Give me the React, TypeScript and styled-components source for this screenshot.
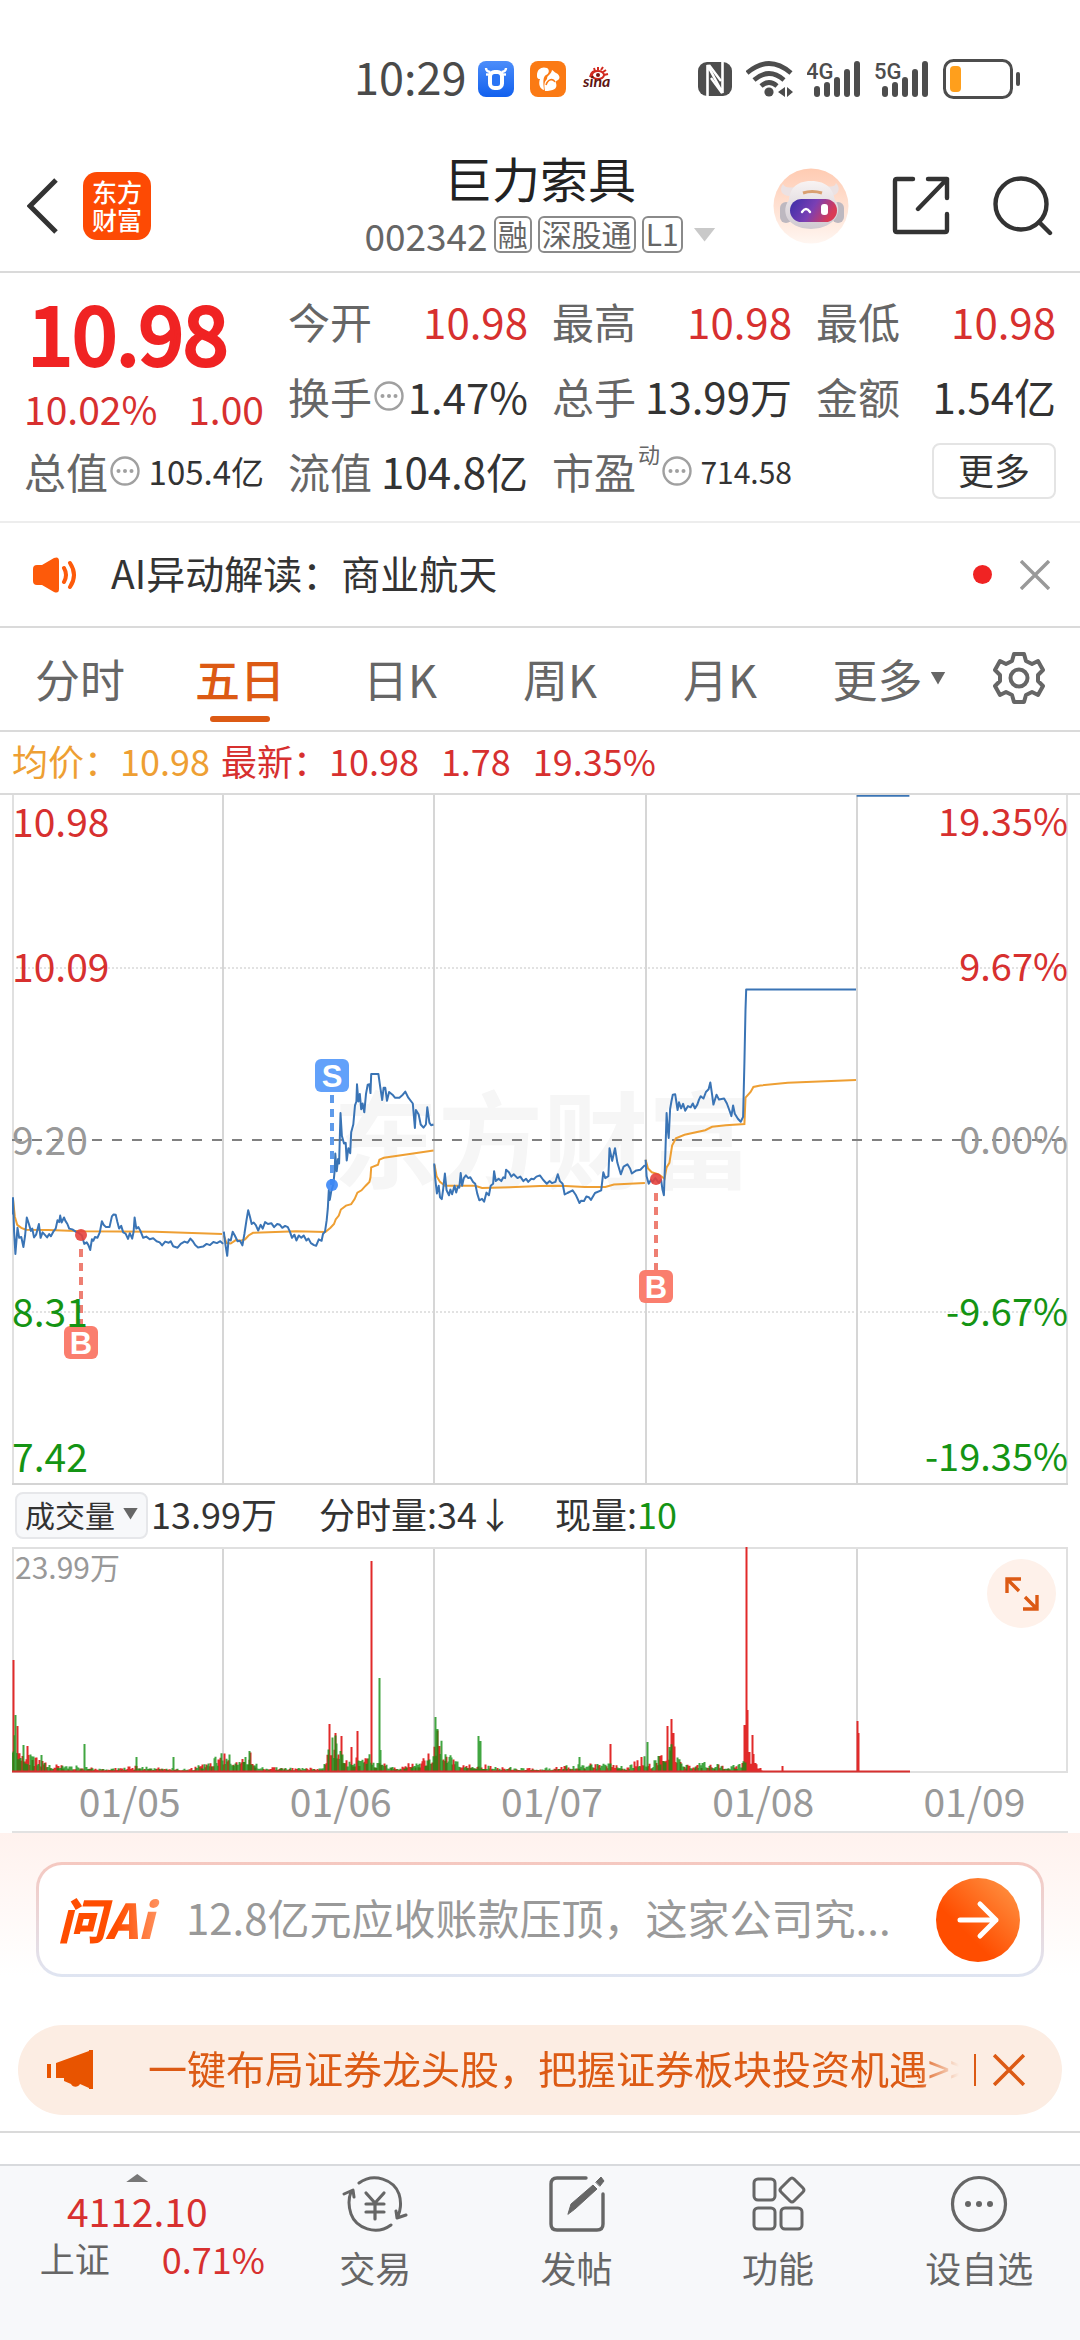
import React from "react";
import styled, { createGlobalStyle } from "styled-components";

const color = {
  up: "#d7302f",
  down: "#149414",
  text: "#333333",
  label: "#666666",
  muted: "#999999",
  line: "#dadada",
  brand: "#dc5a14",
  price: "#3a74b5",
  average: "#ee9f33",
};

const GlobalStyle = createGlobalStyle`
  *, *::before, *::after { box-sizing: border-box; }
  body { margin: 0; background: #ffffff; }
  body, button, input { font-family: "Noto Sans CJK SC", "Noto Sans", sans-serif; }
  button { margin: 0; padding: 0; border: 0; background: none; color: inherit; cursor: pointer; }
  a { color: inherit; text-decoration: none; }
  svg { display: block; flex: none; }
`;

const Page = styled.div`
  display: flex;
  flex-direction: column;
  min-height: 100vh;
  color: ${color.text};
  font-size: 42px;
  white-space: nowrap;
`;

/* ---------- status bar ---------- */

const StatusBar = styled.div`
  display: flex;
  align-items: center;
  justify-content: space-between;
  height: 140px;
  padding: 18px 57px 0 354px;
`;

const StatusLeft = styled.div`
  display: flex;
  align-items: center;
  gap: 12px;
`;

const StatusGroup = styled.div<{ $gap: number }>`
  display: flex;
  align-items: center;
  gap: ${(p) => p.$gap}px;
`;

const Clock = styled.time`
  color: #4a4a4a;
  font-size: 45px;
  line-height: 52px;
  padding-bottom: 6px;
`;

const Signal = ({ label }: { label: string }) => (
  <svg width="54" height="48" viewBox="0 -6 54 48" aria-label={label}>
    <text x="-1" y="18" fontSize="22" fontWeight="500" fontFamily="Roboto, sans-serif" fill="#4d4d4d">
      {label}
    </text>
    {[
      [10, 28],
      [20, 24],
      [30, 19],
      [40, 11],
      [50, 3],
    ].map(([x, y]) => (
      <path key={x} d={`M${x} ${y}V33`} stroke="#4d4d4d" strokeWidth="6" strokeLinecap="round" />
    ))}
  </svg>
);

/* ---------- header ---------- */

const Header = styled.header`
  display: grid;
  grid-template-columns: 1fr auto 1fr;
  align-items: center;
  height: 133px;
  padding: 0 27px;
  border-bottom: 2px solid ${color.line};
`;

const HeaderGroup = styled.div<{ $end?: boolean }>`
  display: flex;
  align-items: center;
  justify-content: ${(p) => (p.$end ? "flex-end" : "flex-start")};
  gap: ${(p) => (p.$end ? 43 : 24)}px;
`;

const AppLogo = styled.span`
  display: grid;
  place-content: center;
  width: 68px;
  height: 68px;
  padding-bottom: 2px;
  border-radius: 14px;
  background: #fd4a04;
  color: #ffffff;
  font-size: 25px;
  font-weight: 500;
  line-height: 28px;
`;

const TitleBlock = styled.div`
  display: flex;
  flex-direction: column;
  align-items: center;
  padding-bottom: 2px;
`;

const Title = styled.h1`
  margin: 0;
  color: #222222;
  font-size: 48px;
  font-weight: 400;
  line-height: 60px;
`;

const CodeRow = styled.button`
  display: flex;
  align-items: center;
  gap: 6px;
  height: 56px;
  color: ${color.label};
  font-size: 37px;
`;

const Tag = styled.span`
  height: 37px;
  padding: 0 2px;
  border: 2px solid #8a8a8a;
  border-radius: 6px;
  font-size: 30px;
  line-height: 30px;
`;

const Triangle = styled.span<{ $w: number; $h: number; $c: string; $up?: boolean; $gap?: number }>`
  width: ${(p) => p.$w}px;
  height: ${(p) => p.$h}px;
  margin-left: ${(p) => p.$gap ?? 0}px;
  background: ${(p) => p.$c};
  clip-path: ${(p) => (p.$up ? "polygon(50% 0, 100% 100%, 0 100%)" : "polygon(0 0, 100% 0, 50% 100%)")};
`;

/* ---------- quote ---------- */

const Quote = styled.section`
  display: grid;
  grid-template-columns: repeat(4, 1fr);
  grid-auto-rows: 75px;
  column-gap: 24px;
  padding: 10px 24px 13px;
  border-bottom: 2px solid #ededed;
`;

const LastPrice = styled.div`
  grid-row: span 2;
  display: flex;
  flex-direction: column;
  color: ${color.up};
`;

const BigPrice = styled.strong`
  padding-left: 4px;
  color: #f02323;
  font-size: 80px;
  font-weight: 400;
  line-height: 94px;
  -webkit-text-stroke: 4px #f02323;
`;

const Change = styled.div`
  display: flex;
  justify-content: space-between;
  font-size: 39px;
  line-height: 62px;
`;

const Metric = styled.div`
  display: flex;
  align-items: center;
  justify-content: space-between;
`;

const MetricLabel = styled.span`
  display: flex;
  align-items: center;
  gap: 2px;
  color: ${color.label};
`;

const Sup = styled.sup`
  align-self: flex-start;
  font-size: 22px;
  line-height: 26px;
`;

const Value = styled.span<{ $up?: boolean; $size?: number }>`
  color: ${(p) => (p.$up ? color.up : color.text)};
  font-size: ${(p) => p.$size ?? 42}px;
`;

const MoreButton = styled.button`
  justify-self: end;
  align-self: center;
  width: 124px;
  height: 56px;
  padding-bottom: 4px;
  border: 2px solid #e4e4e4;
  border-radius: 8px;
  color: ${color.text};
  font-size: 36px;
  line-height: 48px;
`;

const InfoDot = () => (
  <svg width="30" height="30" viewBox="0 0 30 30" aria-hidden>
    <circle cx="15" cy="15" r="13.5" fill="none" stroke="#a0a0a0" strokeWidth="2.4" />
    <g fill="#a0a0a0">
      <circle cx="8.5" cy="15" r="2" />
      <circle cx="15" cy="15" r="2" />
      <circle cx="21.5" cy="15" r="2" />
    </g>
  </svg>
);

/* ---------- notice ---------- */

const Notice = styled.section`
  display: flex;
  align-items: center;
  height: 105px;
  padding: 0 30px 0 33px;
  border-bottom: 2px solid ${color.line};
`;

const NoticeText = styled.a`
  flex: 1;
  margin-left: 33px;
  padding-bottom: 6px;
  font-size: 39px;
  line-height: 52px;
`;

const RedDot = styled.span`
  width: 19px;
  height: 19px;
  margin-right: 28px;
  border-radius: 50%;
  background: #f02323;
`;

/* ---------- tabs ---------- */

const Tabs = styled.nav`
  display: grid;
  grid-template-columns: repeat(5, 160fr) 178fr 82fr;
  height: 104px;
  padding-right: 20px;
  border-bottom: 2px solid ${color.line};
`;

const Tab = styled.button<{ $active?: boolean }>`
  position: relative;
  display: flex;
  align-items: center;
  justify-content: center;
  padding-bottom: 2px;
  color: ${(p) => (p.$active ? color.brand : color.label)};
  font-size: 45px;
  font-weight: ${(p) => (p.$active ? 500 : 400)};

  &::after {
    content: "";
    position: absolute;
    bottom: 8px;
    width: 60px;
    height: 6px;
    border-radius: 3px;
    background: ${(p) => (p.$active ? color.brand : "transparent")};
  }
`;

/* ---------- price chart ---------- */

const Readout = styled.div`
  display: flex;
  align-items: center;
  height: 63px;
  padding: 0 12px 6px;
  color: ${color.up};
  font-size: 36px;
  border-bottom: 2px solid ${color.line};
`;

const ReadoutItem = styled.span<{ $avg?: boolean; $gap: number }>`
  margin-right: ${(p) => p.$gap}px;
  color: ${(p) => (p.$avg ? color.average : color.up)};
`;

const ChartFrame = styled.div`
  position: relative;
  margin: 0 12px;

  svg {
    width: 100%;
    height: auto;
  }
`;

const AxisLabels = styled.ol<{ $right?: boolean }>`
  position: absolute;
  top: 0;
  bottom: 0;
  ${(p) => (p.$right ? "right: 0; text-align: right;" : "left: 0;")}
  display: grid;
  grid-template-rows: 1fr 2fr 2fr 2fr 1fr;
  align-items: center;
  margin: 0;
  padding: 0;
  list-style: none;
  font-size: ${(p) => (p.$right ? 38 : 39)}px;
  line-height: 50px;

  li:first-child { align-self: start; }
  li:last-child { align-self: end; }
`;

const AxisLabel = styled.li<{ $c: string }>`
  padding-bottom: 5px;
  color: ${(p) => p.$c};
`;

type Trace = { x0: number; points: string };

const priceTraces: Trace[] = [
  {
    x0: -35,
    points:
      "35,1135 38,1092 41,1180 45,1238 51,1170 56,1196 62,1194 68,1220 73,1190 78,1143 84,1160 90,1178 94,1172 99,1195 105,1188 113,1160 118,1196 124,1182 130,1188 137,1195 143,1186 148,1192 155,1180 162,1172 167,1150 172,1155 175,1138 179,1156 186,1143 190,1152 196,1160 201,1172 210,1174 220,1180 228,1183 238,1190 245,1212 252,1208 257,1215 262,1228 267,1200 271,1204 276,1194 283,1196 290,1182 296,1153 301,1162 308,1168 318,1168 325,1140 330,1135 336,1136 341,1155 346,1172 352,1165 358,1182 365,1185 372,1199 377,1184 384,1198 388,1180 391,1143 396,1172 402,1168 408,1178 416,1196 425,1193 435,1200 445,1197 455,1205 464,1208 471,1216 480,1206 490,1209 496,1205 503,1218 516,1222 525,1212 536,1206 545,1209 553,1198 560,1205 567,1215 575,1221 590,1219 600,1212 610,1215 620,1207 630,1210 640,1205 648,1212",
  },
  {
    x0: -35,
    points:
      "650,1180 655,1215 660,1243 664,1200 670,1203 676,1180 682,1190 690,1205 697,1204 704,1216 710,1186 716,1150 721,1124 726,1140 731,1160 737,1156 743,1163 750,1177 757,1162 763,1172 770,1155 778,1160 788,1158 796,1168 805,1160 813,1162 820,1170 828,1165 836,1168 842,1180 848,1196 855,1188 861,1203 868,1190 875,1196 882,1190 890,1203 896,1198 903,1210 912,1215 918,1217 926,1200 934,1204 938,1186 944,1180 949,1150 952,1120 955,1072 958,1097 962,1075 968,1057 972,1020 974,976 978,1022 982,990 985,1002 989,870 993,930 999,950 1004,948 1007,994 1012,962 1017,975 1020,920 1026,900 1031,850 1035,840 1037,795 1041,840 1045,820 1049,860 1053,845 1058,868 1063,820 1068,796 1073,795 1076,818 1078,768 1099,768 1104,800 1110,836 1114,804 1119,804 1124,838 1130,815 1140,822 1147,830 1160,830 1170,822 1177,814 1186,830 1199,845 1205,909 1208,862 1216,874 1222,900 1230,908 1237,900 1241,855 1247,895 1252,902 1259,900",
  },
  {
    x0: -35,
    points:
      "1261,1002 1264,1040 1269,1080 1274,1060 1278,1090 1283,1095 1287,1070 1292,1028 1297,1072 1304,1085 1308,1070 1313,1082 1320,1060 1325,1078 1330,1062 1334,1065 1338,1027 1342,1060 1347,1040 1353,1033 1360,1040 1366,1038 1374,1050 1380,1055 1386,1080 1392,1098 1400,1094 1406,1102 1413,1078 1420,1085 1425,1060 1432,1055 1435,1022 1440,1048 1448,1042 1456,1048 1462,1038 1467,1040 1470,1018 1478,1025 1485,1036 1492,1030 1503,1040 1511,1036 1520,1048 1528,1042 1534,1050 1543,1042 1550,1043 1558,1036 1568,1033 1578,1045 1588,1055 1596,1048 1603,1053 1613,1050 1620,1030 1626,1048 1634,1055 1640,1083 1648,1079 1663,1072 1673,1085 1683,1105 1688,1099 1696,1100 1703,1088 1710,1090 1716,1097 1728,1079 1746,1072 1752,1025 1758,1040 1767,1035 1770,962 1778,995 1786,962 1793,1000 1803,1030 1811,1010 1822,1004 1830,1015 1835,1028 1848,1020 1860,1018 1873,1006",
  },
  {
    x0: 1533,
    points:
      "307,992 310,1035 316,1055 322,1045 328,1050 335,1040 345,1052 352,1045 356,1070 360,1085 364,990 366,930 368,870 371,910 374,935 378,860 382,840 386,822 393,821 397,845 400,862 404,842 410,858 416,846 422,864 430,852 438,855 444,845 450,858 457,848 462,835 467,826 475,832 482,815 490,808 495,790 500,822 504,848 513,822 520,835 535,832 543,845 550,862 556,878 561,850 566,872 575,885 583,893 590,880 594,740 597,600 599,547 918,547",
  },
  { x0: 1533, points: "920,41 1073,41" },
];

const averageTraces: Trace[] = [
  { x0: -35, points: "38,1095 43,1140 50,1162 62,1170 75,1175 140,1176 240,1179 450,1180 645,1186" },
  {
    x0: -35,
    points:
      "650,1190 658,1210 670,1211 685,1202 700,1204 712,1200 722,1190 735,1183 800,1181 860,1179 945,1181 960,1170 970,1160 975,1148 984,1138 990,1122 1005,1112 1020,1108 1030,1095 1038,1078 1050,1072 1062,1060 1073,1050 1076,1038 1078,1012 1098,1005 1102,992 1115,987 1180,978 1259,968",
  },
  {
    x0: -35,
    points:
      "1262,1005 1268,1035 1278,1050 1292,1060 1380,1060 1400,1066 1480,1064 1568,1061 1628,1060 1698,1063 1758,1063 1783,1057 1873,1053",
  },
  {
    x0: 1533,
    points:
      "307,992 314,1015 325,1025 345,1030 362,1042 368,1012 376,1000 384,955 395,936 420,927 480,915 500,906 540,902 594,899 597,830 612,815 620,802 640,798 720,791 918,784",
  },
];

/* Traces are stored in a finer unit than the drawing: 2.904 units across and 2.613 down per pixel. */
const UNIT_X = 2.904;
const UNIT_Y = 2.613;

const toPath = ({ x0, points }: Trace) =>
  points
    .split(" ")
    .map((pair, i) => {
      const [x, y] = pair.split(",").map(Number);
      return `${i ? "L" : "M"}${((x + x0) / UNIT_X).toFixed(1)} ${((y - 39) / UNIT_Y).toFixed(1)}`;
    })
    .join("");

const dayLines = [211, 422, 634, 845];

type Marker = { kind: "B" | "S"; x: number; dot: number; top: number };

const markers: Marker[] = [
  { kind: "B", x: 69, dot: 440, top: 531 },
  { kind: "S", x: 320, dot: 390, top: 264 },
  { kind: "B", x: 644, dot: 384, top: 475 },
];

const TradeMarker = ({ kind, x, dot, top }: Marker) => {
  const buy = kind === "B";
  const fill = buy ? "#fa7e6e" : "#62a1fa";
  return (
    <g>
      <path
        d={buy ? `M${x} ${dot + 14}V${top}` : `M${x} ${top + 36}V${dot}`}
        stroke={buy ? "#ee7f73" : "#5f9bea"}
        strokeWidth="4"
        strokeDasharray="8 6"
      />
      <circle cx={x} cy={dot} r="6" fill={buy ? "#e5433c" : "#3b86f5"} fillOpacity="0.9" />
      <rect x={x - 17} y={top} width="34" height="33" rx="6" fill={fill} />
      <text
        x={x}
        y={top + 28}
        textAnchor="middle"
        fontSize="31"
        fontWeight="700"
        fontFamily="Liberation Sans, sans-serif"
        fill="#ffffff"
      >
        {kind}
      </text>
    </g>
  );
};

const PriceChart = () => (
  <svg viewBox="0 0 1056 690" role="img" aria-label="五日走势">
    <text x="321" y="385" fontSize="105" fontWeight="700" fill="#f6f6f6">
      东方财富
    </text>
    <path d="M0 173H1056M0 517H1056" stroke="#e2e2e2" strokeWidth="2" strokeDasharray="2 2" />
    <path d={dayLines.map((x) => `M${x} 0V690`).join("")} stroke="#d6d6d6" strokeWidth="2" />
    <path d="M1 0V690M1055 0V690" stroke="#e0e0e0" strokeWidth="2" />
    <path d="M0 689H1056" stroke="#d4d4d4" strokeWidth="2" />
    <path d="M0 345H1056" stroke="#808080" strokeWidth="2" strokeDasharray="10 10" />
    {averageTraces.map((t) => (
      <path key={t.points} d={toPath(t)} fill="none" stroke={color.average} strokeWidth="2" />
    ))}
    {priceTraces.map((t) => (
      <path key={t.points} d={toPath(t)} fill="none" stroke={color.price} strokeWidth="2" strokeLinejoin="round" />
    ))}
    {markers.map((m) => (
      <TradeMarker key={m.x} {...m} />
    ))}
  </svg>
);

/* ---------- volume chart ---------- */

const VolumeBar = styled.div`
  display: flex;
  align-items: center;
  height: 62px;
  padding: 0 15px 2px;
  font-size: 36px;
`;

const IndicatorButton = styled.button`
  display: flex;
  align-items: center;
  justify-content: center;
  width: 133px;
  height: 47px;
  margin-right: 3px;
  padding-bottom: 3px;
  border: 2px solid #e6e7ea;
  border-radius: 8px;
  background: #f7f8fa;
  font-size: 30px;
`;

const VolumeItem = styled.span`
  margin-right: 42px;
  padding-bottom: 4px;
  line-height: 48px;

  b {
    color: ${color.down};
    font-weight: 400;
  }
`;

const VolumeMax = styled.span`
  position: absolute;
  top: 0;
  left: 3px;
  color: ${color.muted};
  font-size: 30px;
  line-height: 38px;
`;

const ExpandButton = styled.button`
  position: absolute;
  top: 12px;
  right: 12px;
  display: grid;
  place-items: center;
  width: 69px;
  height: 69px;
  border-radius: 50%;
  background: #fef1ea;

  svg {
    width: 36px;
    height: 36px;
  }
`;

const RED = "#e12a2a";
const GREEN = "#129012";

const envelope: [number, number][] = [
  [0, 48], [3, 36], [9, 26], [16, 18], [26, 12], [40, 7], [57, 6], [74, 6], [92, 3], [126, 6],
  [177, 3], [194, 9], [211, 19], [214, 19], [226, 9], [238, 20], [245, 6], [280, 4], [311, 4],
  [315, 28], [324, 36], [330, 24], [336, 11], [350, 16], [357, 24], [363, 8], [368, 12], [384, 4],
  [394, 8], [408, 11], [420, 20], [424, 40], [430, 28], [436, 20], [450, 10], [470, 7], [505, 4],
  [528, 4], [563, 7], [597, 9], [614, 5], [631, 16], [638, 8], [645, 14], [652, 23], [659, 34],
  [666, 17], [673, 8], [697, 10], [714, 5], [728, 8], [732, 18], [735, 34], [739, 16], [748, 4],
  [752, 1], [908, 1],
];

const spikes: [number, number, string][] = [
  [1, 112, RED], [5, 46, RED], [15, 26, RED], [3, 57, GREEN], [11, 27, GREEN], [29, 17, GREEN],
  [72, 28, GREEN], [124, 15, GREEN], [161, 15, GREEN], [237, 21, GREEN], [317, 48, RED],
  [323, 39, RED], [329, 36, RED], [339, 25, RED], [345, 41, RED], [359, 211, RED],
  [367, 94, GREEN], [368, 22, GREEN], [423, 55, GREEN], [425, 43, GREEN], [466, 36, GREEN],
  [468, 31, GREEN], [567, 15, GREEN], [598, 28, RED], [635, 30, GREEN], [646, 16, GREEN],
  [655, 46, RED], [659, 53, RED], [661, 39, RED], [732, 47, RED], [734, 225, RED], [735, 62, RED],
  [740, 37, RED], [741, 18, RED], [770, 6, RED], [845, 51, RED], [846, 39, RED],
];

const heightAt = (x: number) => {
  const i = Math.max(1, envelope.findIndex(([ex]) => ex >= x));
  const [x1, h1] = envelope[i - 1];
  const [x2, h2] = envelope[i];
  return h1 + ((h2 - h1) * (x - x1)) / (x2 - x1);
};

const volumeBars = (() => {
  let seed = 11;
  const next = () => (seed = (seed * 16807) % 2147483647) / 2147483647;
  const bars: [number, number, string][] = [];
  for (let x = 0; x < 752; x += 1) {
    const r = next();
    const h = heightAt(x) * (0.4 + 0.7 * r * r);
    const c = x > 733 ? RED : next() > 0.5 ? RED : GREEN;
    bars.push([x, Math.max(1, h), c]);
  }
  return [...bars, ...spikes];
})();

const barPath = (c: string) =>
  volumeBars
    .filter((b) => b[2] === c)
    .map(([x, h]) => `M${x + 0.5} 225V${(225 - h).toFixed(1)}`)
    .join("");

const VolumeChart = () => (
  <svg viewBox="0 0 1056 226" role="img" aria-label="成交量">
    <path d={dayLines.map((x) => `M${x} 0V225`).join("")} stroke="#d6d6d6" strokeWidth="2" />
    <path d="M1 0V225M1055 0V225M0 225H1056M0 1H1056" stroke="#e0e0e0" strokeWidth="2" />
    <path d={barPath(RED)} stroke={RED} strokeWidth="2" />
    <path d={barPath(GREEN)} stroke={GREEN} strokeWidth="2" strokeOpacity="0.8" />
    <path d="M0 224.5H898" stroke={color.up} strokeWidth="2" />
  </svg>
);

const Dates = styled.div`
  display: grid;
  grid-template-columns: repeat(5, 1fr);
  height: 58px;
  padding-left: 24px;
  color: ${color.muted};
  font-size: 39px;
  line-height: 54px;
  text-align: center;
`;

const ChartEnd = styled.hr`
  height: 0;
  margin: 0 12px;
  border: 0;
  border-top: 2px solid #e2e2e2;
`;

/* ---------- promotions ---------- */

const Promo = styled.section`
  display: flex;
  flex-direction: column;
  padding: 29px 18px 16px;
  background: linear-gradient(#fff2ee, #ffffff 48%);
  border-bottom: 2px solid ${color.line};
`;

const AskBox = styled.form`
  display: flex;
  align-items: center;
  height: 115px;
  margin: 0 18px 48px;
  padding: 0 21px 0 19px;
  border: 3px solid transparent;
  border-radius: 26px;
  background:
    linear-gradient(#ffffff, #ffffff) padding-box,
    linear-gradient(#f5c8c0, #dfe5f2) border-box;
`;

const AskLogo = styled.label`
  width: 106px;
  padding-bottom: 4px;
  background: linear-gradient(90deg, #ff4d00 55%, #ff9a6a);
  background-clip: text;
  color: transparent;
  font-size: 48px;
  font-style: italic;
  font-weight: 900;
  line-height: 60px;
`;

const AskInput = styled.input`
  flex: 1;
  min-width: 0;
  margin-left: 22px;
  padding: 0 0 6px;
  border: 0;
  outline: 0;
  background: none;
  font-size: 42px;
  line-height: 60px;

  &::placeholder {
    color: ${color.muted};
    opacity: 1;
  }
`;

const SendButton = styled.button`
  display: grid;
  place-items: center;
  width: 84px;
  height: 84px;
  border-radius: 50%;
  background: linear-gradient(45deg, #ff4d00 35%, #ff9a4a);
`;

const Banner = styled.div`
  display: flex;
  align-items: center;
  height: 90px;
  padding: 0 37px 0 29px;
  border-radius: 45px;
  background: #fcede3;
  color: ${color.brand};
`;

const BannerText = styled.a`
  flex: 1;
  min-width: 0;
  overflow: hidden;
  margin: 0 15px 0 54px;
  padding-bottom: 6px;
  font-size: 39px;
  line-height: 56px;
  mask-image: linear-gradient(90deg, #000 95%, transparent);
`;

const BannerClose = styled.button`
  padding-left: 17px;
  border-left: 2px solid ${color.brand};
`;

/* ---------- bottom bar ---------- */

const BottomBar = styled.nav`
  display: grid;
  grid-template-columns: 274fr repeat(4, 201fr);
  align-items: start;
  flex: 1;
  margin-top: 31px;
  border-top: 2px solid #d8dadd;
  background: #f7f8fa;
`;

const IndexButton = styled.button`
  display: flex;
  flex-direction: column;
  align-items: center;
  padding-top: 8px;
  color: ${color.up};
  font-size: 39px;
  line-height: 48px;
`;

const IndexPrice = styled.span`
  padding-top: 4px;
`;

const IndexRow = styled.span`
  display: flex;
  gap: 52px;
  padding-left: 30px;
  font-size: 36px;

  em {
    color: ${color.label};
    font-size: 35px;
    font-style: normal;
  }
`;

const NavItem = styled.button`
  display: flex;
  flex-direction: column;
  align-items: center;
  gap: 9px;
  padding-top: 8px;
  color: ${color.label};
  font-size: 36px;
  line-height: 48px;
`;

const NavIcon = ({ children }: { children: React.ReactNode }) => (
  <svg width="66" height="60" viewBox="0 0 66 60" fill="none" stroke="#666666" strokeWidth="3" strokeLinecap="round" strokeLinejoin="round">
    {children}
  </svg>
);

const Cross = ({ size, stroke }: { size: number; stroke: string }) => (
  <svg width={size} height={size} viewBox="0 0 30 30" fill="none" stroke={stroke} strokeWidth="3.4">
    <path d="M1 1L29 29M29 1L1 29" />
  </svg>
);

const Robot = () => (
  <svg width="76" height="76" viewBox="0 0 76 76" aria-hidden>
    <defs>
      <linearGradient id="halo" x1="0" y1="0" x2="0" y2="1">
        <stop offset="0" stopColor="#ffcbb2" />
        <stop offset="1" stopColor="#fff6f1" />
      </linearGradient>
      <linearGradient id="visor" x1="0" y1="0" x2="1" y2="0.3">
        <stop offset="0" stopColor="#3a2fa8" />
        <stop offset="0.55" stopColor="#7a3fb4" />
        <stop offset="1" stopColor="#d93a55" />
      </linearGradient>
      <linearGradient id="shell" x1="0" y1="0" x2="0" y2="1">
        <stop offset="0" stopColor="#f8f3f3" />
        <stop offset="1" stopColor="#cfc9d0" />
      </linearGradient>
    </defs>
    <circle cx="38" cy="38" r="37.5" fill="url(#halo)" />
    <path d="M17 28C8 28 6 21 10 16C12 20 16 20 22 19ZM58 28C66 27 68 20 63 15C62 19 58 19 54 18Z" fill="#ece2e3" />
    <rect x="7" y="34" width="12" height="21" rx="6" fill="#bdb8c0" />
    <rect x="59" y="34" width="12" height="21" rx="6" fill="#bdb8c0" />
    <path d="M38 13C55 13 60 22 62 32C70 42 64 60 38 61C12 60 8 42 16 32C17 22 22 13 38 13Z" fill="url(#shell)" />
    <rect x="17" y="31" width="47" height="23" rx="11.5" fill="url(#visor)" />
    <path d="M30 25Q39 22 49 25" stroke="#d9a071" strokeWidth="3" fill="none" />
    <path d="M29 44Q33 38 37 44" stroke="#ffffff" strokeWidth="2.4" fill="none" strokeLinecap="round" />
    <rect x="48" y="36" width="7" height="11" rx="3" fill="#ffffff" />
  </svg>
);

export default function App() {
  return (
    <Page>
      <GlobalStyle />

      <StatusBar>
        <StatusLeft>
          <Clock>10:29</Clock>
          <StatusGroup $gap={16}>
            <svg width="36" height="36" viewBox="0 0 36 36" aria-hidden>
              <defs>
                <linearGradient id="ox" x1="0" y1="0" x2="0" y2="1">
                  <stop offset="0" stopColor="#4c8dfa" />
                  <stop offset="1" stopColor="#1160ee" />
                </linearGradient>
              </defs>
              <rect width="36" height="36" rx="8" fill="url(#ox)" />
              <path d="M8 7C8 10 10 11 12.500 11M28 7C28 10 26 11 23.500 11" stroke="#fff" strokeWidth="2.400" fill="none" />
              <path d="M8 13.500H28" stroke="#fff" strokeWidth="2.400" />
              <rect x="12" y="11" width="12" height="16" rx="4.500" stroke="#fff" strokeWidth="4" fill="#2a74f4" />
            </svg>
            <svg width="36" height="36" viewBox="0 0 36 36" aria-hidden>
              <rect width="36" height="36" rx="8" fill="#fb7a14" />
              <path
                d="M7 14C7 8 12 5 17 7C20 9 19 13 16 14C13 16 13 20 14 29C10 28 8 23 10 18C7 18 7 16 7 14ZM17 18C17 14 21 14 22 9C24 10 24 11 26 12C29 13 31 17 28 19C27 20 25 20 26 22C28 28 23 30 15 30C14 24 14 21 17 18Z"
                fill="#fff"
              />
              <path d="M16 24C18 18 23 17 25 21" stroke="#fb7a14" strokeWidth="1.600" fill="none" />
            </svg>
            <svg width="36" height="36" viewBox="0 0 36 36" aria-label="sina">
              <path d="M8 16C9 11 12 9 15 11M13 10L12 7M16 9V6M19 9L21 6M21 11L24 9M22 14L26 13" stroke="#d22a20" strokeWidth="2" fill="none" />
              <ellipse cx="16" cy="14" rx="6" ry="4" fill="#fff" stroke="#d22a20" strokeWidth="2" />
              <circle cx="16" cy="14" r="2" fill="#7a1712" />
              <text x="1" y="26" fontSize="16" fontWeight="700" fontStyle="italic" fontFamily="Lato, sans-serif" fill="#5e1512">
                sina
              </text>
            </svg>
          </StatusGroup>
        </StatusLeft>
        <StatusGroup $gap={14}>
          <svg width="34" height="34" viewBox="0 0 34 34" aria-label="NFC">
            <rect width="34" height="34" rx="9" fill="#4d4d4d" />
            <path d="M9.500 34V3L24.500 31V0" fill="none" stroke="#fff" strokeWidth="2.600" />
            <path d="M13 16L24 31M11 3L23 19" stroke="#fff" strokeWidth="2.400" />
          </svg>
          <svg width="47" height="36" viewBox="0 0 47 36" fill="none" stroke="#4d4d4d" strokeWidth="4.600" aria-label="Wi-Fi">
            <path d="M1 12Q23 -7 45 12M8 19Q23 6 38 19M15 25Q23 18 31 25" />
            <circle cx="23" cy="31" r="4.600" fill="#4d4d4d" stroke="none" />
            <path d="M39 26V36L32 31ZM41 26V36L47 31Z" fill="#4d4d4d" stroke="none" />
          </svg>
          <Signal label="4G" />
          <Signal label="5G" />
          <svg width="80" height="40" viewBox="0 0 80 40" aria-label="电量">
            <rect x="1.500" y="1.500" width="67" height="37" rx="9" fill="none" stroke="#4d4d4d" strokeWidth="3" />
            <rect x="7" y="7" width="11" height="26" rx="4" fill="#ff9f1c" />
            <path d="M75 15V25" stroke="#4d4d4d" strokeWidth="4" strokeLinecap="round" />
          </svg>
        </StatusGroup>
      </StatusBar>

      <Header>
        <HeaderGroup>
          <button aria-label="返回">
            <svg width="32" height="56" viewBox="0 0 32 56" fill="none" stroke="#333" strokeWidth="5">
              <path d="M29 2L3 28L29 54" />
            </svg>
          </button>
          <AppLogo>
            <span>东方</span>
            <span>财富</span>
          </AppLogo>
        </HeaderGroup>
        <TitleBlock>
          <Title>巨力索具</Title>
          <CodeRow>
            002342
            <Tag>融</Tag>
            <Tag>深股通</Tag>
            <Tag>L1</Tag>
            <Triangle $w={22} $h={14} $c="#c9c9c9" $gap={5} />
          </CodeRow>
        </TitleBlock>
        <HeaderGroup $end>
          <button aria-label="智能助手">
            <Robot />
          </button>
          <button aria-label="分享">
            <svg width="58" height="60" viewBox="0 0 58 60" fill="none" stroke="#333" strokeWidth="4.400" strokeLinecap="round" strokeLinejoin="round">
              <path d="M21 3H5Q3 3 3 5V54Q3 56 5 56H53Q55 56 55 54V38M36 3H55V22M55 3L26 33" />
            </svg>
          </button>
          <button aria-label="搜索">
            <svg width="60" height="60" viewBox="0 0 60 60" fill="none" stroke="#333" strokeWidth="4.400" strokeLinecap="round">
              <circle cx="28" cy="28" r="25.500" />
              <path d="M46 46L57 57" />
            </svg>
          </button>
        </HeaderGroup>
      </Header>

      <Quote>
        <LastPrice>
          <BigPrice>10.98</BigPrice>
          <Change>
            <span>10.02%</span>
            <span>1.00</span>
          </Change>
        </LastPrice>
        <Metric>
          <MetricLabel>今开</MetricLabel>
          <Value $up>10.98</Value>
        </Metric>
        <Metric>
          <MetricLabel>最高</MetricLabel>
          <Value $up>10.98</Value>
        </Metric>
        <Metric>
          <MetricLabel>最低</MetricLabel>
          <Value $up>10.98</Value>
        </Metric>
        <Metric>
          <MetricLabel>
            换手
            <InfoDot />
          </MetricLabel>
          <Value>1.47%</Value>
        </Metric>
        <Metric>
          <MetricLabel>总手</MetricLabel>
          <Value>13.99万</Value>
        </Metric>
        <Metric>
          <MetricLabel>金额</MetricLabel>
          <Value>1.54亿</Value>
        </Metric>
        <Metric>
          <MetricLabel>
            总值
            <InfoDot />
          </MetricLabel>
          <Value $size={33}>105.4亿</Value>
        </Metric>
        <Metric>
          <MetricLabel>流值</MetricLabel>
          <Value>104.8亿</Value>
        </Metric>
        <Metric>
          <MetricLabel>
            市盈
            <Sup>动</Sup>
            <InfoDot />
          </MetricLabel>
          <Value $size={30}>714.58</Value>
        </Metric>
        <MoreButton>更多</MoreButton>
      </Quote>

      <Notice>
        <svg width="45" height="36" viewBox="0 0 45 36" aria-hidden>
          <path d="M0 12Q0 8 4 8H9L21 1Q26 -1 26 4V32Q26 37 21 35L9 28H4Q0 28 0 24Z" fill="#fd5a0a" />
          <path d="M31 11Q35 18 31 25M37 6Q45 18 37 30" fill="none" stroke="#fd5a0a" strokeWidth="4" strokeLinecap="round" />
        </svg>
        <NoticeText href="#notice">AI异动解读：商业航天</NoticeText>
        <RedDot />
        <button aria-label="关闭">
          <Cross size={30} stroke="#999999" />
        </button>
      </Notice>

      <Tabs>
        <Tab>分时</Tab>
        <Tab $active>五日</Tab>
        <Tab>日K</Tab>
        <Tab>周K</Tab>
        <Tab>月K</Tab>
        <Tab>
          更多
          <Triangle $w={15} $h={13} $c="#666666" $gap={8} />
        </Tab>
        <Tab aria-label="设置">
          <svg width="54" height="54" viewBox="0 0 54 54" fill="none" stroke="#666" strokeWidth="4" strokeLinejoin="round">
            <path d="M22 3H32L34 10L40 13L46 10L51 19L46 24V30L51 35L46 44L40 41L34 44L32 51H22L20 44L14 41L8 44L3 35L8 30V24L3 19L8 10L14 13L20 10Z" />
            <circle cx="27" cy="27" r="8.500" />
          </svg>
        </Tab>
      </Tabs>

      <Readout>
        <ReadoutItem $avg $gap={11}>均价：10.98</ReadoutItem>
        <ReadoutItem $gap={22}>最新：10.98</ReadoutItem>
        <ReadoutItem $gap={22}>1.78</ReadoutItem>
        <ReadoutItem $gap={0}>19.35%</ReadoutItem>
      </Readout>

      <ChartFrame>
        <PriceChart />
        <AxisLabels>
          <AxisLabel $c={color.up}>10.98</AxisLabel>
          <AxisLabel $c={color.up}>10.09</AxisLabel>
          <AxisLabel $c={color.muted}>9.20</AxisLabel>
          <AxisLabel $c={color.down}>8.31</AxisLabel>
          <AxisLabel $c={color.down}>7.42</AxisLabel>
        </AxisLabels>
        <AxisLabels $right>
          <AxisLabel $c={color.up}>19.35%</AxisLabel>
          <AxisLabel $c={color.up}>9.67%</AxisLabel>
          <AxisLabel $c={color.muted}>0.00%</AxisLabel>
          <AxisLabel $c={color.down}>-9.67%</AxisLabel>
          <AxisLabel $c={color.down}>-19.35%</AxisLabel>
        </AxisLabels>
      </ChartFrame>

      <VolumeBar>
        <IndicatorButton>
          成交量
          <Triangle $w={15} $h={12} $c="#666666" $gap={8} />
        </IndicatorButton>
        <VolumeItem>13.99万</VolumeItem>
        <VolumeItem>分时量:34↓</VolumeItem>
        <VolumeItem>
          现量:<b>10</b>
        </VolumeItem>
      </VolumeBar>

      <ChartFrame>
        <VolumeChart />
        <VolumeMax>23.99万</VolumeMax>
        <ExpandButton aria-label="全屏">
          <svg viewBox="0 0 36 36" fill="none" stroke={color.brand} strokeWidth="3.400">
            <path d="M3 17V3H17M3 3L15 15M33 19V33H19M33 33L21 21" />
          </svg>
        </ExpandButton>
      </ChartFrame>
      <Dates>
        <span>01/05</span>
        <span>01/06</span>
        <span>01/07</span>
        <span>01/08</span>
        <span>01/09</span>
      </Dates>
      <ChartEnd />

      <Promo>
        <AskBox>
          <AskLogo htmlFor="ask">问Ai</AskLogo>
          <AskInput id="ask" placeholder="12.8亿元应收账款压顶，这家公司究..." />
          <SendButton type="button" aria-label="发送">
            <svg width="44" height="40" viewBox="0 0 44 40" fill="none" stroke="#fff" strokeWidth="5" strokeLinecap="round" strokeLinejoin="round">
              <path d="M4 20H40M24 4L40 20L24 36" />
            </svg>
          </SendButton>
        </AskBox>
        <Banner>
          <svg width="47" height="40" viewBox="0 0 47 40" fill="#e85400" aria-hidden>
            <path d="M0 14H4V28H0ZM9 13L42 1V0H46V39H42V38L33 34C31 38 25 37 24 34L17 31V28H9Z" />
          </svg>
          <BannerText href="#promo">一键布局证券龙头股，把握证券板块投资机遇&gt;&gt;</BannerText>
          <BannerClose aria-label="关闭">
            <Cross size={32} stroke={color.brand} />
          </BannerClose>
        </Banner>
      </Promo>

      <BottomBar>
        <IndexButton>
          <Triangle $w={22} $h={8} $c="#777777" $up />
          <IndexPrice>4112.10</IndexPrice>
          <IndexRow>
            <em>上证</em>
            <span>0.71%</span>
          </IndexRow>
        </IndexButton>
        <NavItem>
          <NavIcon>
            <path d="M17 9C32 -2 52 6 57 20C60 29 58 38 56 42M49 51C34 62 14 54 9 40C6 31 7 23 9 18M2 20L11 16L12 23M64 41L55 44L54 37" />
            <path d="M24 19L33 29L42 19M33 29V45M24 30H42M24 38H42" strokeWidth="3.200" />
          </NavIcon>
          交易
        </NavItem>
        <NavItem>
          <NavIcon>
            <path d="M42 4H13Q7 4 7 10V50Q7 56 13 56H53Q59 56 59 50V20" strokeWidth="3.400" />
            <path d="M24 40L27 30L49 11L53 15L31 35ZM52 8L57 3L60 7L56 12Z" fill="#666666" strokeWidth="1" />
          </NavIcon>
          发帖
        </NavItem>
        <NavItem>
          <NavIcon>
            <rect x="9" y="5" width="21" height="21" rx="4" />
            <rect x="9" y="34" width="21" height="21" rx="4" />
            <rect x="36" y="34" width="21" height="21" rx="4" />
            <path d="M45 5Q47 3 49 5L58 14Q60 16 58 18L49 27Q47 29 45 27L36 18Q34 16 36 14Z" />
          </NavIcon>
          功能
        </NavItem>
        <NavItem>
          <NavIcon>
            <circle cx="33" cy="30" r="26.500" strokeWidth="3.200" />
            <g fill="#666666" stroke="none">
              <circle cx="22" cy="30" r="3" />
              <circle cx="33" cy="30" r="3" />
              <circle cx="44" cy="30" r="3" />
            </g>
          </NavIcon>
          设自选
        </NavItem>
      </BottomBar>
    </Page>
  );
}
